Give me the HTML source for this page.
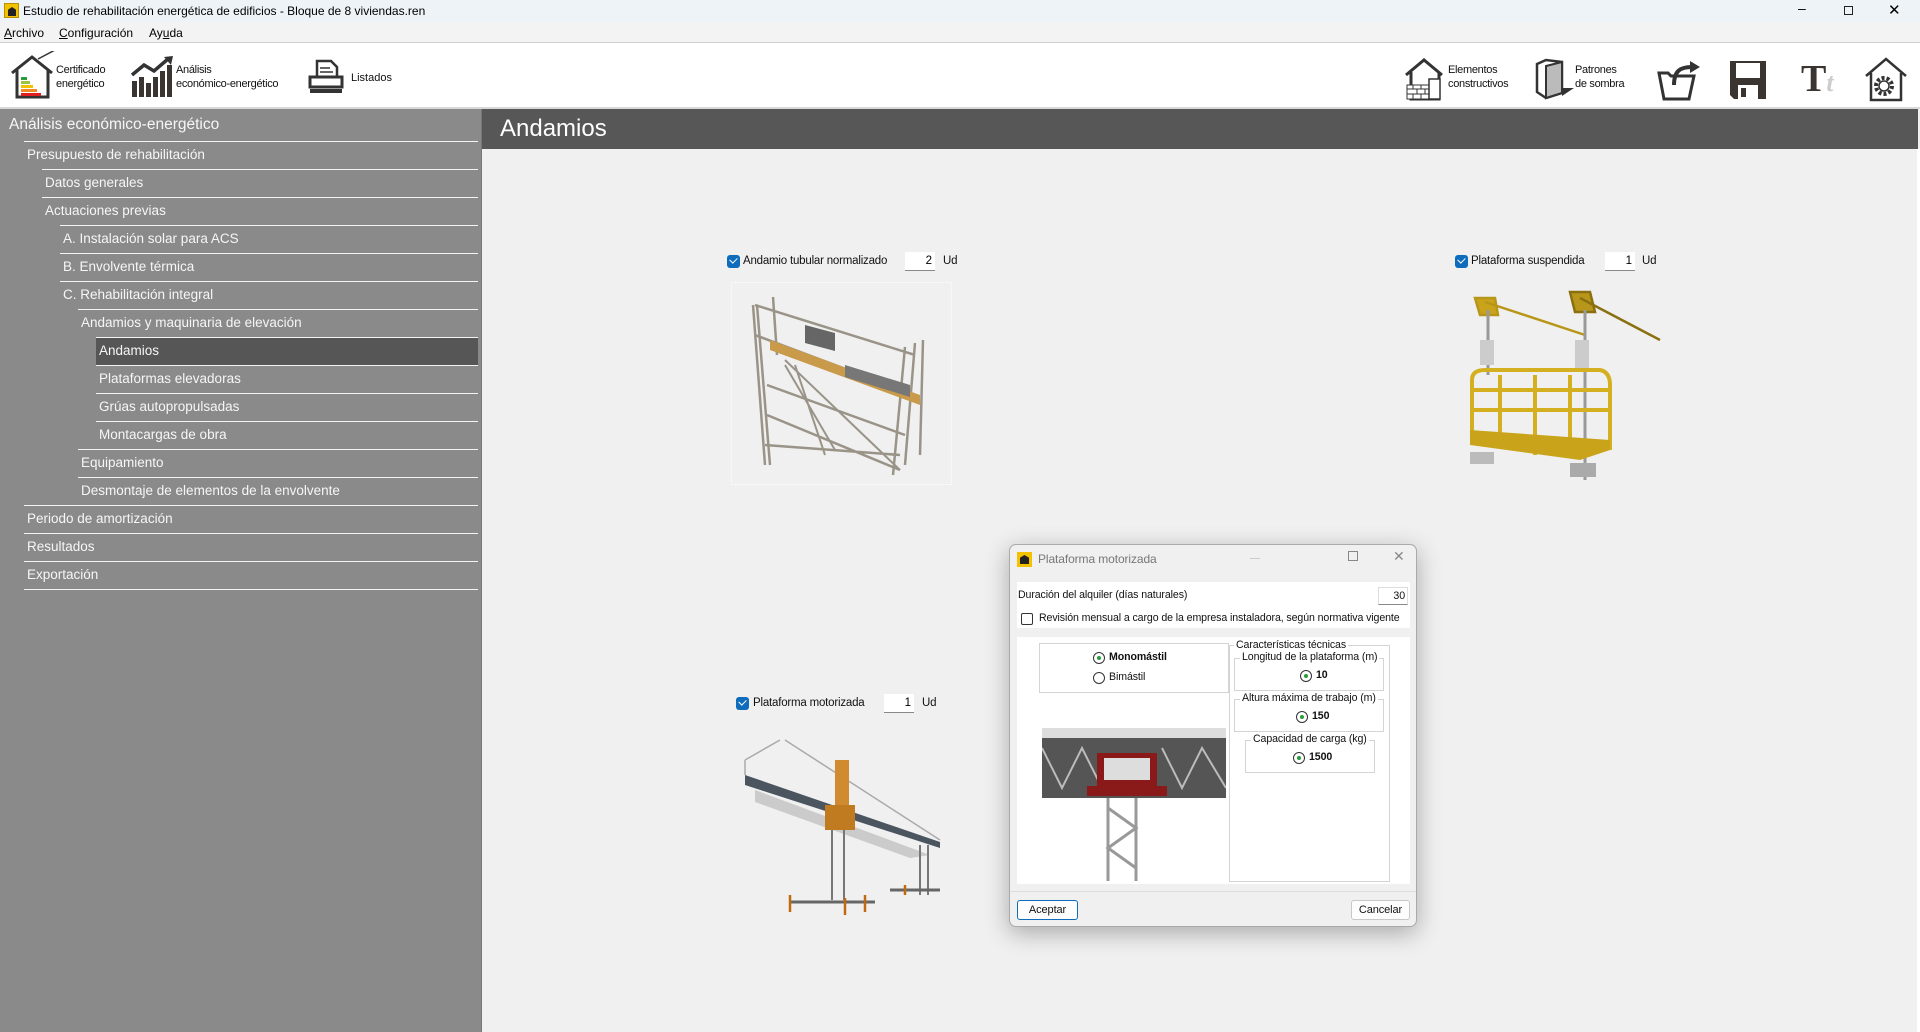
<!DOCTYPE html>
<html><head><meta charset="utf-8"><style>
*{box-sizing:border-box;margin:0;padding:0}
body{width:1920px;height:1032px;overflow:hidden;background:#f0f0f0;font-family:"Liberation Sans",sans-serif;position:relative}
.a{position:absolute}
.t{position:absolute;white-space:nowrap}
#title{left:0;top:0;width:1920px;height:22px;background:#eef3f8;font-size:12px}
#menu{left:0;top:22px;width:1920px;height:21px;background:#f3f3f3;border-bottom:1px solid #d0d0d0;font-size:12px}
#tool{left:0;top:43px;width:1920px;height:66px;background:#fff;border-bottom:2px solid #d8d8d8;font-size:11px;color:#111}
#side{left:0;top:109px;width:482px;height:923px;background:#8a8a8a;border-right:1px solid #777}
.row{position:absolute;height:28px;border-top:1px solid #f4f4f4;color:#f6f6f6;font-size:13.5px;line-height:25px;padding-left:3px;right:3px}
.sel{background:#565656}
#hdr{left:482px;top:109px;width:1436px;height:40px;background:#575757;color:#fff;font-size:24px;line-height:40px;padding-left:18px}
.cb{position:absolute;width:13px;height:13px;background:#0f6cbd;border-radius:3px}
.cb:after{content:"";position:absolute;left:3px;top:2px;width:6px;height:4px;border-left:1.5px solid #fff;border-bottom:1.5px solid #fff;transform:rotate(-45deg)}
.inp{position:absolute;height:19px;background:#fff;border-bottom:1px solid #888;font-size:11.5px;text-align:right;padding-right:3px;line-height:18px}
.lbl{position:absolute;font-size:11.5px;white-space:nowrap;color:#111;letter-spacing:-0.2px}
#dlg{left:1009px;top:544px;width:408px;height:383px;background:#f0f0f0;border:1px solid #aaa;border-radius:7px;box-shadow:0 6px 24px rgba(0,0,0,.3);font-size:10.6px;color:#111;letter-spacing:-0.1px}
.fs{position:absolute;border:1px solid #d4d4d4}
.lg{position:absolute;background:#fff;padding:0 2px;white-space:nowrap;top:-8px}
.rd{position:absolute;width:12px;height:12px;border:1px solid #333;border-radius:50%;background:#fff}
.rd.on:after{content:"";position:absolute;left:3px;top:3px;width:4px;height:4px;border-radius:50%;background:#2a9d3a}
.btn{position:absolute;height:20px;background:#fdfdfd;border:1px solid #c8c8c8;border-radius:3px;text-align:center;font-size:11px;line-height:18px}
</style></head><body>

<div id="title" class="a">
 <div class="a" style="left:4px;top:3px;width:15px;height:15px;background:#f2c200;border:1px solid #b89000"><div class="a" style="left:3px;top:3px;width:8px;height:9px;background:#222;clip-path:polygon(0 30%,50% 0,100% 30%,100% 100%,0 100%)"></div></div>
 <div class="t" style="left:23px;top:4px">Estudio de rehabilitación energética de edificios - Bloque de 8 viviendas.ren</div>
 <div class="t" style="left:1798px;top:0;font-size:14px">&#8211;</div>
 <div class="a" style="left:1844px;top:6px;width:9px;height:9px;border:1px solid #222"></div>
 <div class="t" style="left:1888px;top:1px;font-size:15px">&#10005;</div>
</div>
<div id="menu" class="a">
 <div class="t" style="left:4px;top:4px"><u>A</u>rchivo</div>
 <div class="t" style="left:59px;top:4px"><u>C</u>onfiguración</div>
 <div class="t" style="left:149px;top:4px">Ay<u>u</u>da</div>
</div>
<div id="tool" class="a">
 <svg class="a" style="left:10px;top:8px" width="46" height="48" viewBox="0 0 46 48"><path d="M2 22 L22 6 L42 22 M7 19 V46 H38 V19" fill="none" stroke="#333" stroke-width="3"/><path d="M28 8 L45 -1" stroke="#333" stroke-width="1.5"/><rect x="11" y="26" width="6" height="3" fill="#2a9d3a"/><rect x="11" y="30" width="9" height="3" fill="#9bc53d"/><rect x="11" y="34" width="12" height="3" fill="#f2c200"/><rect x="11" y="38" width="16" height="3" fill="#f08a24"/><rect x="11" y="42" width="20" height="3" fill="#e02020"/></svg>
 <div class="t" style="left:56px;top:20px;line-height:14px;letter-spacing:-0.3px">Certificado<br>energético</div>
 <svg class="a" style="left:130px;top:12px" width="46" height="42" viewBox="0 0 46 42"><path d="M2 20 L14 10 L24 16 L38 4" fill="none" stroke="#333" stroke-width="3.5"/><path d="M34 2 L43 1 L41 10 Z" fill="#333"/><g fill="#3a3530"><rect x="2" y="26" width="5" height="16"/><rect x="9" y="22" width="5" height="20"/><rect x="16" y="28" width="5" height="14"/><rect x="23" y="22" width="5" height="20"/><rect x="30" y="16" width="5" height="26"/><rect x="37" y="10" width="5" height="32"/></g></svg>
 <div class="t" style="left:176px;top:20px;line-height:14px;letter-spacing:-0.3px">Análisis<br>económico-energético</div>
 <svg class="a" style="left:308px;top:16px" width="36" height="36" viewBox="0 0 36 36"><path d="M9 2 H23 L29 8 V18 H9 Z" fill="#fff" stroke="#333" stroke-width="2.5"/><path d="M12 9 H22 M12 13 H25" stroke="#333" stroke-width="1.5"/><path d="M2 18 H34 V28 H2 Z" fill="#fff" stroke="#333" stroke-width="3"/><rect x="2" y="30" width="32" height="4" fill="#333"/></svg>
 <div class="t" style="left:351px;top:29px">Listados</div>

 <svg class="a" style="left:1403px;top:14px" width="46" height="44" viewBox="0 0 46 44"><path d="M3 18 L21 3 L39 18 M8 15 V42 H36 V15" fill="none" stroke="#333" stroke-width="3"/><rect x="4" y="28" width="22" height="14" fill="#fff" stroke="#333"/><path d="M4 32 H26 M4 37 H26 M10 28 V32 M18 28 V32 M14 32 V37 M22 32 V37 M10 37 V42 M18 37 V42" stroke="#333"/><rect x="26" y="22" width="11" height="20" fill="#fff" stroke="#333" stroke-width="1.5"/></svg>
 <div class="t" style="left:1448px;top:20px;line-height:14px;letter-spacing:-0.3px">Elementos<br>constructivos</div>
 <svg class="a" style="left:1534px;top:15px" width="42" height="42" viewBox="0 0 42 42"><path d="M3 6 L12 2 L28 4 L28 35 L12 40 L3 34 Z" fill="#fff" stroke="#333" stroke-width="2.5"/><path d="M12 8 L28 4 L28 35 L12 40 Z" fill="#bbb" stroke="#333" stroke-width="2"/><path d="M28 30 L40 30 L28 38Z" fill="#333"/></svg>
 <div class="t" style="left:1575px;top:20px;line-height:14px;letter-spacing:-0.3px">Patrones<br>de sombra</div>
 <svg class="a" style="left:1656px;top:16px" width="46" height="42" viewBox="0 0 46 42"><path d="M3 14 H12 L15 17 H38 L33 40 H8 Z M3 14 L8 40" fill="#fff" stroke="#333" stroke-width="3"/><path d="M18 26 C18 12 24 8 36 8" fill="none" stroke="#333" stroke-width="4"/><path d="M34 2 L44 8 L34 14Z" fill="#333"/></svg>
 <svg class="a" style="left:1729px;top:17px" width="38" height="40" viewBox="0 0 38 40"><path d="M1 1 H37 V39 H5 L1 35 Z" fill="#3a3530"/><rect x="7" y="3" width="24" height="15" fill="#fff"/><rect x="9" y="25" width="20" height="14" fill="#fff"/><rect x="12" y="28" width="5" height="9" fill="#3a3530"/></svg>
 <div class="t" style="left:1801px;top:14px;font-family:'Liberation Serif',serif;font-size:38px;font-weight:bold;color:#3a3530">T<span style="font-size:26px;color:#ccc;font-style:italic">t</span></div>
 <svg class="a" style="left:1863px;top:13px" width="46" height="46" viewBox="0 0 46 46"><path d="M3 20 L23 3 L43 20 M8 17 V44 H38 V17" fill="none" stroke="#333" stroke-width="2.5"/><circle cx="21" cy="30" r="8" fill="#fff" stroke="#333" stroke-width="4" stroke-dasharray="3 2"/><circle cx="21" cy="30" r="5" fill="#fff" stroke="#333" stroke-width="1.5"/></svg>
</div>

<div id="side" class="a">
 <div class="t" style="left:9px;top:7px;color:#f6f6f6;font-size:15.5px">Análisis económico-energético</div>
 <div class="row" style="top:32px;left:24px">Presupuesto de rehabilitación</div>
 <div class="row" style="top:60px;left:42px">Datos generales</div>
 <div class="row" style="top:88px;left:42px">Actuaciones previas</div>
 <div class="row" style="top:116px;left:60px">A. Instalación solar para ACS</div>
 <div class="row" style="top:144px;left:60px">B. Envolvente térmica</div>
 <div class="row" style="top:172px;left:60px">C. Rehabilitación integral</div>
 <div class="row" style="top:200px;left:78px">Andamios y maquinaria de elevación</div>
 <div class="row sel" style="top:228px;left:96px">Andamios</div>
 <div class="row" style="top:256px;left:96px">Plataformas elevadoras</div>
 <div class="row" style="top:284px;left:96px">Grúas autopropulsadas</div>
 <div class="row" style="top:312px;left:96px">Montacargas de obra</div>
 <div class="row" style="top:340px;left:78px">Equipamiento</div>
 <div class="row" style="top:368px;left:78px">Desmontaje de elementos de la envolvente</div>
 <div class="row" style="top:396px;left:24px">Periodo de amortización</div>
 <div class="row" style="top:424px;left:24px">Resultados</div>
 <div class="row" style="top:452px;left:24px">Exportación</div>
 <div class="a" style="top:480px;left:24px;right:3px;border-top:1px solid #f4f4f4"></div>
</div>
<div id="hdr" class="a">Andamios</div>
<div class="a" style="left:1917px;top:149px;width:3px;height:883px;background:#fff"></div>

<!-- Andamio tubular -->
<div class="cb" style="left:727px;top:255px"></div>
<div class="lbl" style="left:743px;top:255px">Andamio tubular normalizado</div>
<div class="inp" style="left:905px;top:252px;width:30px">2</div>
<div class="lbl" style="left:943px;top:255px">Ud</div>
<div class="a" style="left:731px;top:282px;width:221px;height:203px;border:1px dotted #fff"></div>
<svg class="a" style="left:745px;top:285px" width="180" height="195" viewBox="0 0 180 195">
 <g stroke="#9a9488" stroke-width="2.5" fill="none">
  <path d="M8 20 L20 180 M12 20 L25 180 M28 12 L32 70 M160 62 L148 190 M170 58 L160 180 M178 55 L175 170 M10 20 L170 70 M10 50 L170 110 M22 130 L155 185 M22 100 L160 150 M20 160 L155 170"/>
  <path d="M40 80 L90 165 M50 80 L80 170 M40 75 L155 185" stroke-width="2"/>
 </g>
 <path d="M25 55 L175 110 L175 120 L25 65 Z" fill="#c89a4a"/>
 <path d="M60 40 L90 48 L90 66 L60 58 Z" fill="#666"/>
 <path d="M100 80 L165 100 L165 112 L100 92 Z" fill="#777"/>
</svg>

<!-- Plataforma suspendida -->
<div class="cb" style="left:1455px;top:255px"></div>
<div class="lbl" style="left:1471px;top:255px">Plataforma suspendida</div>
<div class="inp" style="left:1605px;top:252px;width:30px">1</div>
<div class="lbl" style="left:1642px;top:255px">Ud</div>
<svg class="a" style="left:1460px;top:280px" width="210" height="205" viewBox="0 0 210 205">
 <path d="M15 18 H35 L38 35 H20 Z M25 22 L125 55" stroke="#b8961a" stroke-width="2.5" fill="#c9a41a"/>
 <path d="M110 12 H130 L135 32 H115 Z M120 18 L200 60" stroke="#8a7010" stroke-width="2.5" fill="#b8961a"/>
 <path d="M28 30 V95 M125 30 V200" stroke="#999" stroke-width="3"/>
 <rect x="20" y="60" width="14" height="25" fill="#ccc"/><rect x="115" y="60" width="14" height="30" fill="#ccc"/>
 <g stroke="#d4b020" stroke-width="4" fill="none"><path d="M12 165 V100 Q12 90 25 90 H140 Q150 92 150 105 V170 M12 130 H150 M12 110 H150 M40 95 V168 M75 95 V175 M110 95 V175"/></g>
 <path d="M10 165 L120 180 L150 170 L150 160 L10 150 Z" fill="#c9a41a"/>
 <rect x="10" y="172" width="24" height="12" fill="#bbb"/><rect x="110" y="183" width="26" height="14" fill="#aaa"/>
</svg>

<!-- Plataforma motorizada -->
<div class="cb" style="left:736px;top:697px"></div>
<div class="lbl" style="left:753px;top:697px">Plataforma motorizada</div>
<div class="inp" style="left:884px;top:694px;width:30px">1</div>
<div class="lbl" style="left:922px;top:697px">Ud</div>
<svg class="a" style="left:740px;top:730px" width="210" height="185" viewBox="0 0 210 185">
 <path d="M5 45 L200 112 L200 118 L5 55 Z" fill="#4a5560"/>
 <path d="M5 30 L5 45 M45 10 L200 110 M5 30 L40 10" stroke="#aaa" stroke-width="1.5" fill="none"/>
 <path d="M15 60 L190 125 L170 128 L15 72 Z" fill="#bbb" opacity=".7"/>
 <rect x="85" y="75" width="30" height="25" fill="#c07a20"/><rect x="95" y="30" width="14" height="45" fill="#d08a30"/>
 <path d="M92 100 V170 M104 100 V170 M180 115 V165 M188 115 V165" stroke="#777" stroke-width="2"/>
 <path d="M50 172 H135 M150 160 H200" stroke="#666" stroke-width="3"/>
 <path d="M50 165 V182 M125 165 V182 M105 168 V185 M165 155 V165" stroke="#c06a10" stroke-width="2.5"/>
</svg>

<!-- Dialog -->
<div id="dlg" class="a">
 <div class="a" style="left:7px;top:7px;width:15px;height:15px;background:#f2c200"><div class="a" style="left:3px;top:3px;width:9px;height:9px;background:#222;clip-path:polygon(0 30%,50% 0,100% 30%,100% 100%,0 100%)"></div></div>
 <div class="t" style="left:28px;top:7px;font-size:12px;color:#777">Plataforma motorizada</div>
 <div class="a" style="left:240px;top:13px;width:10px;border-top:1px solid #ccc"></div>
 <div class="a" style="left:338px;top:6px;width:10px;height:10px;border:1px solid #888"></div>
 <div class="t" style="left:383px;top:3px;font-size:14px;color:#888">&#10005;</div>
 <div class="a" style="left:7px;top:37px;width:393px;height:46px;background:#fff"></div>
 <div class="t" style="left:8px;top:44px">Duración del alquiler (días naturales)</div>
 <div class="a" style="left:368px;top:42px;width:30px;height:18px;background:#fff;border:1px solid #ddd;border-bottom-color:#888;text-align:right;padding-right:2px;line-height:16px">30</div>
 <div class="a" style="left:11px;top:68px;width:12px;height:12px;border:1px solid #333;border-radius:2px;background:#fff"></div>
 <div class="t" style="left:29px;top:67px">Revisión mensual a cargo de la empresa instaladora, según normativa vigente</div>
 <div class="a" style="left:7px;top:92px;width:393px;height:247px;background:#fff"></div>
 <div class="fs" style="left:29px;top:98px;width:190px;height:50px"></div>
 <div class="rd on" style="left:83px;top:107px"></div><div class="t" style="left:99px;top:106px;font-weight:bold">Monomástil</div>
 <div class="rd" style="left:83px;top:127px"></div><div class="t" style="left:99px;top:126px">Bimástil</div>
 <svg class="a" style="left:32px;top:183px" width="184" height="153" viewBox="0 0 184 153">
  <rect x="0" y="10" width="184" height="60" fill="#555"/>
  <path d="M0 20 L20 60 L40 20 L60 60 M120 20 L140 60 L160 20 L184 60" stroke="#bbb" stroke-width="2" fill="none"/>
  <rect x="0" y="0" width="184" height="10" fill="#ddd"/>
  <rect x="55" y="25" width="60" height="35" fill="#8a1a1a"/><rect x="62" y="30" width="46" height="22" fill="#ddd"/>
  <rect x="45" y="58" width="80" height="10" fill="#8a1a1a"/>
  <path d="M66 70 V153 M94 70 V153 M66 80 L94 100 L66 120 L94 140" stroke="#999" stroke-width="3" fill="none"/>
 </svg>
 <div class="fs" style="left:219px;top:100px;width:161px;height:237px"><div class="lg" style="left:4px;top:-7px">Características técnicas</div></div>
 <div class="fs" style="left:224px;top:113px;width:150px;height:33px"><div class="lg" style="left:5px">Longitud de la plataforma (m)</div></div>
 <div class="rd on" style="left:290px;top:125px"></div><div class="t" style="left:306px;top:124px;font-weight:bold">10</div>
 <div class="fs" style="left:224px;top:154px;width:150px;height:33px"><div class="lg" style="left:5px">Altura máxima de trabajo (m)</div></div>
 <div class="rd on" style="left:286px;top:166px"></div><div class="t" style="left:302px;top:165px;font-weight:bold">150</div>
 <div class="fs" style="left:235px;top:195px;width:130px;height:33px"><div class="lg" style="left:5px">Capacidad de carga (kg)</div></div>
 <div class="rd on" style="left:283px;top:207px"></div><div class="t" style="left:299px;top:206px;font-weight:bold">1500</div>
 <div class="a" style="left:0;top:346px;width:406px;border-top:1px solid #ddd"></div>
 <div class="btn" style="left:7px;top:355px;width:61px;border-color:#0f6cbd">Aceptar</div>
 <div class="btn" style="left:341px;top:355px;width:59px">Cancelar</div>
</div>
</body></html>
